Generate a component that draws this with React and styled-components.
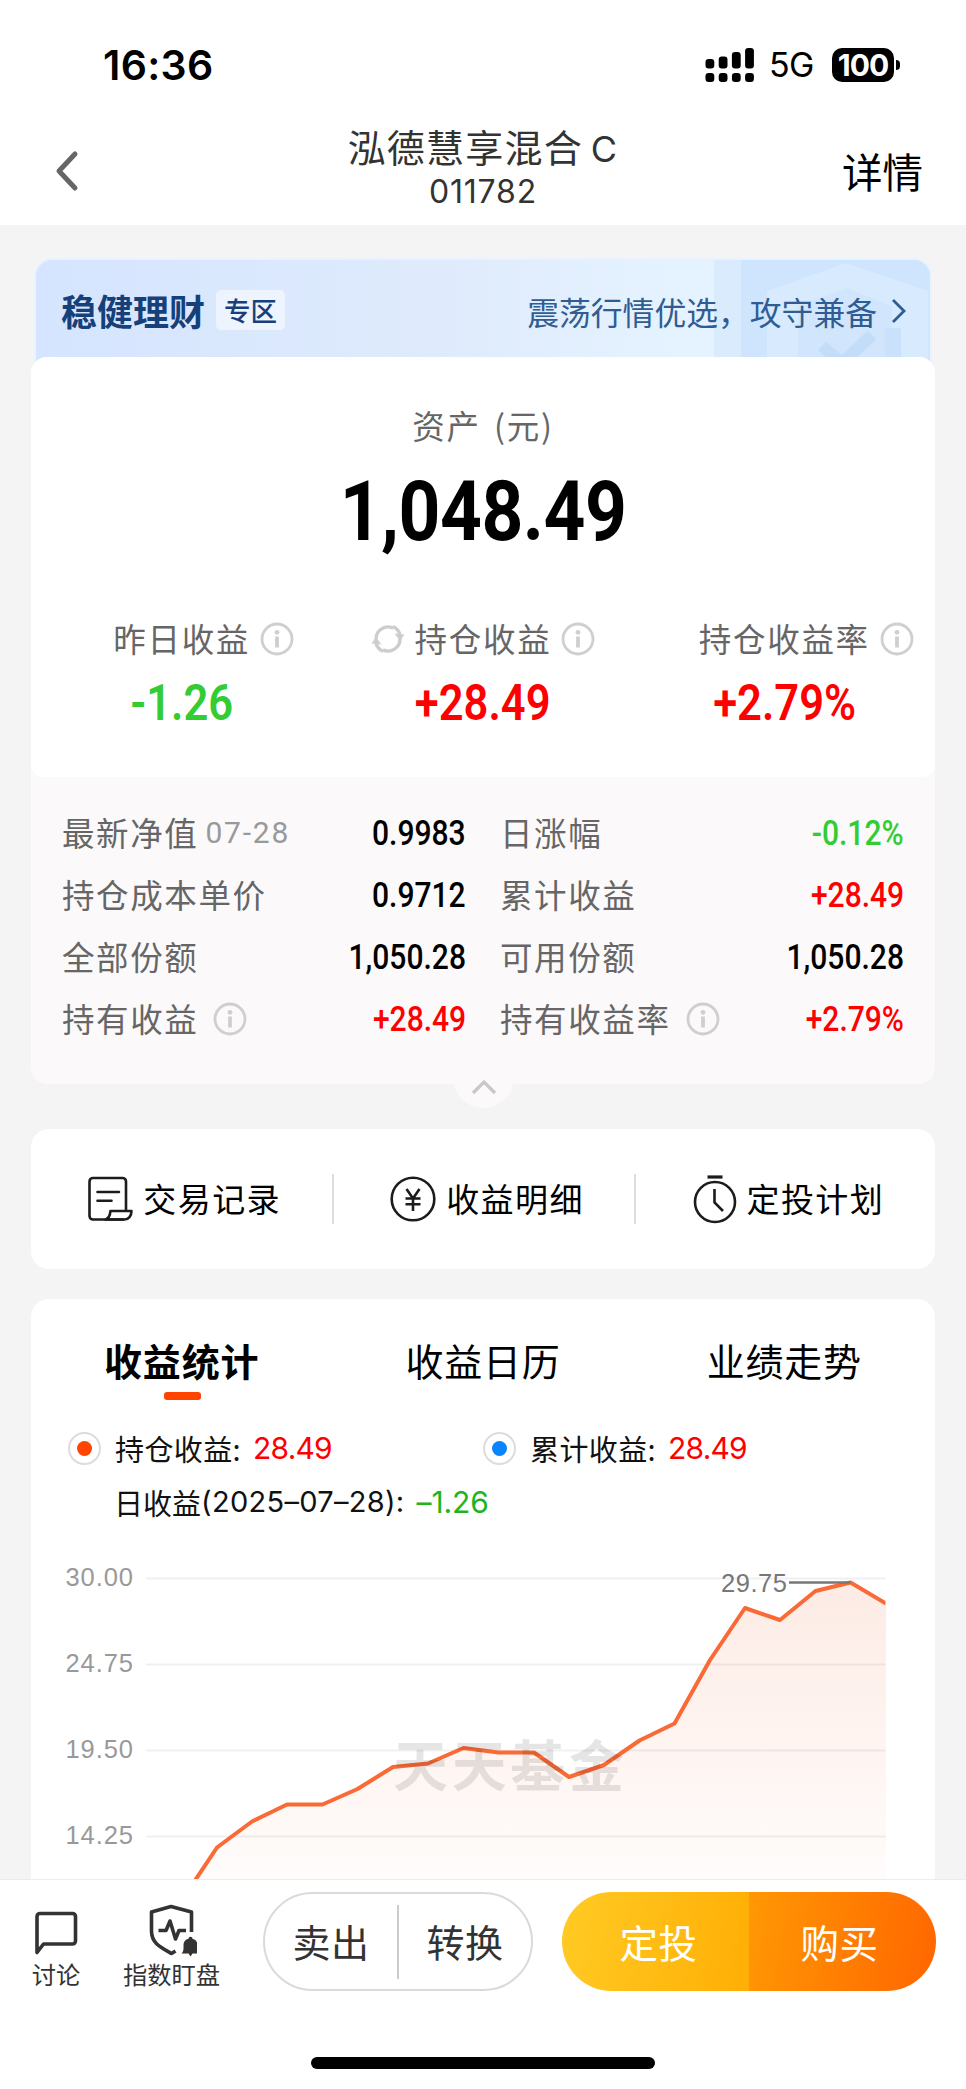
import styled, { createGlobalStyle, css } from "styled-components";

const HOLDING_METRICS = [
  { label: "昨日收益", value: "-1.26", tone: "down" },
  { label: "持仓收益", value: "+28.49", tone: "up", refresh: true },
  { label: "持仓收益率", value: "+2.79%", tone: "up" },
];

const DETAILS = [
  { label: "最新净值", date: "07-28", value: "0.9983" },
  { label: "日涨幅", value: "-0.12%", tone: "down" },
  { label: "持仓成本单价", value: "0.9712" },
  { label: "累计收益", value: "+28.49", tone: "up" },
  { label: "全部份额", value: "1,050.28" },
  { label: "可用份额", value: "1,050.28" },
  { label: "持有收益", value: "+28.49", tone: "up", info: true },
  { label: "持有收益率", value: "+2.79%", tone: "up", info: true },
];

const TABS = ["收益统计", "收益日历", "业绩走势"];

const AXIS = [
  { label: "30.00", y: 38.5 },
  { label: "24.75", y: 124.5 },
  { label: "19.50", y: 210.5 },
  { label: "14.25", y: 296.5 },
];

const POINTS = [
  [163, 342], [186, 307.5], [221, 281.5], [256, 264.5], [291.5, 264.5],
  [326.5, 249], [362, 227], [397, 223.5], [432.5, 208], [467.5, 212.5],
  [503, 212.5], [538, 237], [573, 225], [608.5, 200.5], [643.5, 183.5],
  [679, 120], [714, 68], [749, 80], [784.5, 51], [819.5, 42.5], [855, 63.5],
];

const InfoIcon = () => (
  <svg width="34" height="34" viewBox="0 0 34 34" fill="none" stroke="#cfcfcf">
    <circle cx="17" cy="17" r="15" strokeWidth="2.8" />
    <circle cx="17" cy="10.3" r="2.4" fill="#cfcfcf" stroke="none" />
    <path d="M17 14.5v11" strokeWidth="3.8" />
  </svg>
);

const RefreshIcon = () => (
  <svg width="34" height="32" viewBox="0 0 34 32" fill="none" stroke="#cdcdcd" strokeWidth="3.4">
    <path d="M5 16A12 12 0 0 1 22 5.100" />
    <path d="M29 16A12 12 0 0 1 12 26.900" />
    <path d="M22 3.500A13 13 0 0 1 29 12" />
    <path d="M12 28.500A13 13 0 0 1 5 20" />
    <path d="M0.500 20.500l4.500-6.500 5.500 7.500z" fill="#cdcdcd" stroke="none" />
    <path d="M33.500 11.500l-4.500 6.500-5.500-7.500z" fill="#cdcdcd" stroke="none" />
  </svg>
);

const RecordIcon = () => (
  <svg width="45" height="46" viewBox="0 0 45 46" fill="none" stroke="#1c1c1c" strokeWidth="2.6" strokeLinejoin="round">
    <path d="M38 34V5.500a3.500 3.500 0 0 0-3.500-3.500H5a3.500 3.500 0 0 0-3.500 3.500V40a3.500 3.500 0 0 0 3.500 3.500h31" />
    <path d="M22.500 35h21c0 5-3 8.500-7 8.500H17.500c3.500-1 4.500-4 5-8.500z" />
    <path d="M9.500 16H31M9.500 24.800h14" strokeLinecap="round" />
  </svg>
);

const YuanIcon = () => (
  <svg width="46" height="46" viewBox="0 0 46 46" fill="none" stroke="#1c1c1c" strokeWidth="2.6">
    <circle cx="23" cy="23" r="21.300" />
    <path d="M16.500 13l6.500 9.500 6.500-9.500M23 22.500v12.500M15.500 22.500h15M15.500 28.200h15" />
  </svg>
);

const TimerIcon = () => (
  <svg width="44" height="50" viewBox="0 0 44 50" fill="none" stroke="#1c1c1c" strokeWidth="2.6">
    <circle cx="22" cy="28" r="20" />
    <path d="M14.500 3h15" strokeWidth="3.200" />
    <path d="M21.500 15v13.500l8.500 8.500" />
  </svg>
);

const ChatIcon = () => (
  <svg width="44" height="46" viewBox="0 0 44 46" fill="none" stroke="#333" strokeWidth="3.6" strokeLinejoin="round">
    <path d="M3 41.500V5.500A3 3 0 0 1 6 2.500H38.500a3 3 0 0 1 3 3V30a3 3 0 0 1-3 3H9.500z" />
  </svg>
);

const WatchIcon = () => (
  <svg width="50" height="54" viewBox="-1.500 -2 50 54" fill="none" stroke="#333" strokeWidth="3.6" strokeLinejoin="round">
    <path d="M43 27V7L22.500 1.500 3 7V26c0 12 8.500 16 20 22.500l4-2.500" />
    <path d="M10 25.500h7.500l4-9.500 5.500 18 3.500-8.500h7" />
    <path d="M33 48.500c2.500-2.500 2-5 2-8.500a6.500 6.500 0 0 1 5-6.300a2 2 0 0 1 4 0a6.500 6.500 0 0 1 5 6.300c0 3.500-.5 6 1 8.500h-6l-2 3-2-3z" fill="#333" stroke="none" />
  </svg>
);

const SignalIcon = () => (
  <svg width="50" height="34" viewBox="0 0 50 34">
    {[11, 8.5, 4, 0].map((top, i) => (
      <g key={top}>
        <rect x={0.5 + i * 13.2} y={top} width="8.800" height={20.5 - top} rx="3.200" />
        <rect x={0.5 + i * 13.2} y="25" width="8.800" height="9" rx="3.200" />
      </g>
    ))}
  </svg>
);

function Chart() {
  const line = POINTS.map((p) => p.join(",")).join(" ");
  return (
    <ChartSvg width="904" height="339" viewBox="0 0 904 339">
      <defs>
        <linearGradient id="area" x1="0" y1="42" x2="0" y2="339" gradientUnits="userSpaceOnUse">
          <stop offset="0" stopColor="#f26a3b" stopOpacity="0.135" />
          <stop offset="1" stopColor="#f26a3b" stopOpacity="0.020" />
        </linearGradient>
        <clipPath id="plot">
          <rect x="115" y="0" width="739.500" height="339" />
        </clipPath>
      </defs>
      <polygon points={`${line} 855,342`} fill="url(#area)" />
      {AXIS.map(({ label, y }) => (
        <g key={label}>
          <path d={`M115 ${y}H854.500`} stroke="#000" strokeOpacity="0.060" strokeWidth="2" />
          <text x="102" y={y + 7} textAnchor="end" textLength="67.500" fill="#999">{label}</text>
        </g>
      ))}
      <polyline points={line} clipPath="url(#plot)" fill="none" stroke="#f96a37" strokeWidth="4" strokeLinejoin="round" />
      <path d="M758 42.500H819.500" stroke="#777" strokeWidth="2.600" />
      <text x="690" y="52" textLength="66" fill="#777">29.75</text>
      <Watermark x="362" y="246" textLength="231">天天基金</Watermark>
    </ChartSvg>
  );
}

function App() {
  return (
    <Page>
      <GlobalStyle />
      <StatusBar>
        <Clock>16:36</Clock>
        <StatusIcons>
          <SignalIcon />
          <Network>5G</Network>
          <Battery>100</Battery>
        </StatusIcons>
      </StatusBar>
      <NavBar>
        <svg width="26" height="44" viewBox="0 0 26 44" fill="none" stroke="#666" strokeWidth="5" strokeLinecap="round" strokeLinejoin="round">
          <path d="M21 5L5 22 21 39" />
        </svg>
        <NavTitle>
          <h1>泓德慧享混合<span>C</span></h1>
          <p>011782</p>
        </NavTitle>
        <NavLink>详情</NavLink>
      </NavBar>

      <Content>
        <Banner>
          <BannerArt width="216" height="113" viewBox="0 0 216 113">
            <path d="M0 0H216V113H0z" fill="#daebfe" />
            <path d="M27 0H216V113H27z" fill="#cfe5fe" />
            <path d="M132 3L214 31V113H53V31z" fill="#d7eafe" />
            <path d="M132 28L178 46V113H84V46z" fill="#d1e6fd" />
            <path d="M108 86L128 103 158 75" fill="none" stroke="#c3ddf9" strokeWidth="12" />
            <path d="M171 68h16v45h-16z" fill="#cae1fb" />
          </BannerArt>
          <BannerTitle>稳健理财</BannerTitle>
          <BannerTag>专区</BannerTag>
          <BannerLink>
            震荡行情优选，攻守兼备
            <svg width="16" height="26" viewBox="0 0 16 26" fill="none" stroke="#2f5d93" strokeWidth="2.8">
              <path d="M2 2l11 11L2 24" />
            </svg>
          </BannerLink>
        </Banner>

        <Holding>
          <AssetCard>
            <AssetLabel>资产 (元)</AssetLabel>
            <AssetValue>1,048.49</AssetValue>
            <Metrics>
              {HOLDING_METRICS.map(({ label, value, tone, refresh }) => (
                <div key={label}>
                  <MetricLabel>
                    <IconSlot $end>{refresh && <RefreshIcon />}</IconSlot>
                    <span>{label}</span>
                    <IconSlot><InfoIcon /></IconSlot>
                  </MetricLabel>
                  <MetricValue $tone={tone}>{value}</MetricValue>
                </div>
              ))}
            </Metrics>
          </AssetCard>
          <Details>
            {DETAILS.map(({ label, date, value, tone, info }) => (
              <DetailRow key={label}>
                <DetailLabel>{label}</DetailLabel>
                {date && <DetailDate>{date}</DetailDate>}
                {info && <InfoIcon />}
                <DetailValue $tone={tone}>{value}</DetailValue>
              </DetailRow>
            ))}
          </Details>
          <Collapse>
            <svg width="26" height="18" viewBox="0 0 26 18" fill="none" stroke="#c8c8c8" strokeWidth="3.200">
              <path d="M2 14L13 3 24 14" />
            </svg>
          </Collapse>
        </Holding>

        <Actions>
          <Action><RecordIcon /><span>交易记录</span></Action>
          <Action><YuanIcon /><span>收益明细</span></Action>
          <Action><TimerIcon /><span>定投计划</span></Action>
        </Actions>

        <StatsCard>
          <Tabs>
            {TABS.map((tab, i) => (
              <Tab key={tab} $active={i === 0}>{tab}</Tab>
            ))}
          </Tabs>
          <Legend>
            <LegendItem><Dot $color="#ff4400" />持仓收益:<LegendValue $tone="up">28.49</LegendValue></LegendItem>
            <LegendItem><Dot $color="#0a84ff" />累计收益:<LegendValue $tone="up">28.49</LegendValue></LegendItem>
          </Legend>
          <DayProfit>
            日收益<span>(2025–07–28):</span>
            <DayValue $tone="day">–1.26</DayValue>
          </DayProfit>
          <Chart />
        </StatsCard>
      </Content>

      <BottomBar>
        <Toolbar>
          <ToolItem $width={84}><ChatIcon />讨论</ToolItem>
          <ToolItem $width={147}><WatchIcon />指数盯盘</ToolItem>
          <OutlinePill>
            <button>卖出</button>
            <button>转换</button>
          </OutlinePill>
          <BuyPill>
            <InvestButton>定投</InvestButton>
            <BuyButton>购买</BuyButton>
          </BuyPill>
        </Toolbar>
        <HomeIndicator />
      </BottomBar>
    </Page>
  );
}

const cjk = `"Noto Sans CJK SC", sans-serif`;
const latin = `Inter, "Noto Sans CJK SC", sans-serif`;
const digits = `Roboto, "Noto Sans CJK SC", sans-serif`;

const tones = { up: "#ff0000", down: "#33cc33", day: "#1db51d" };

const GlobalStyle = createGlobalStyle`
  * {
    box-sizing: border-box;
  }

  body, h1, p {
    margin: 0;
  }

  body {
    background-color: #f4f4f4;
    font-family: ${cjk};
  }

  svg {
    display: block;
    flex: none;
  }

  button {
    border: 0;
    padding: 0;
    background: none;
    font: inherit;
    color: inherit;
    letter-spacing: inherit;
  }
`;

/* condensed numerals */
const Condensed = css`
  font-family: ${digits};
  transform: scaleX(0.87);
  white-space: nowrap;
`;

const Page = styled.div`
  width: 966px;
  height: 2089px;
  display: flex;
  flex-direction: column;
  overflow: hidden;
`;

const StatusBar = styled.header`
  flex: none;
  height: 105px;
  padding: 24px 66px 0 103px;
  display: flex;
  align-items: center;
  justify-content: space-between;
  background-color: white;
`;

const Clock = styled.span`
  font: 600 41px/50px ${latin};
  letter-spacing: 0.3px;
`;

const StatusIcons = styled.div`
  display: flex;
  align-items: center;
`;

const Network = styled.span`
  margin: 0 18px 0 14px;
  font: 400 34px/40px ${latin};
  letter-spacing: -0.5px;
`;

const Battery = styled.span`
  position: relative;
  width: 62px;
  height: 34px;
  margin-right: 6px;
  border-radius: 10px;
  background-color: black;
  color: white;
  text-align: center;
  font: 700 30px/34px ${latin};
  letter-spacing: -1px;

  &::after {
    content: "";
    position: absolute;
    right: -6px;
    top: 12px;
    width: 4px;
    height: 10px;
    border-radius: 0 4px 4px 0;
    background-color: black;
  }
`;

const NavBar = styled.nav`
  flex: none;
  height: 120px;
  padding: 12px 43px 0 54px;
  display: grid;
  grid-template-columns: 80px 1fr 91px;
  align-items: center;
  background-color: white;
`;

const NavTitle = styled.div`
  padding-bottom: 9px;
  text-align: center;
  color: #333;

  h1 {
    font: 400 38px/46px ${cjk};
    letter-spacing: 1.2px;
  }

  h1 span {
    margin-left: 8px;
    font-family: ${latin};
    font-size: 36px;
  }

  p {
    margin-top: 1px;
    font: 400 32px/38px ${latin};
    letter-spacing: 0.8px;
  }
`;

const NavLink = styled.a`
  text-align: right;
  font-size: 40.5px;
  line-height: 50px;
`;

const Content = styled.main`
  flex: 1;
  min-height: 0;
  overflow: hidden;
  padding: 35px 31px 0;
`;

const Banner = styled.section`
  position: relative;
  height: 113px;
  margin: 0 5px;
  padding: 0 23px 13px 25px;
  display: flex;
  align-items: center;
  overflow: hidden;
  border-radius: 16px 16px 0 0;
  background: linear-gradient(90deg, #d5e5ff, #dfebfc 45%, #e5f2ff 72%);
  box-shadow: 0 0 0 2px #eaf2fc;
`;

const BannerArt = styled.svg`
  position: absolute;
  right: 0;
  top: 0;
`;

const BannerTitle = styled.strong`
  color: #164079;
  font-size: 36px;
  line-height: 44px;
`;

const BannerTag = styled.span`
  margin-left: 11px;
  padding: 0 8px;
  border-radius: 5px;
  background-color: rgba(255, 255, 255, 0.5);
  color: #164079;
  font-size: 26.5px;
  font-weight: 500;
  line-height: 40px;
`;

const BannerLink = styled.a`
  position: relative;
  margin-left: auto;
  padding-top: 1px;
  display: flex;
  align-items: center;
  gap: 14px;
  color: #2f5d93;
  font-size: 31.8px;
  line-height: 40px;
`;

const Holding = styled.section`
  position: relative;
  height: 727px;
  margin-top: -16px;
  border-radius: 16px;
  background-color: #fbf9fa;
`;

const AssetCard = styled.div`
  position: relative;
  height: 420px;
  padding-top: 47px;
  border-radius: 16px 16px 12px 12px;
  background-color: white;
  text-align: center;
`;

const AssetLabel = styled.p`
  color: #666;
  font-size: 32.5px;
  line-height: 42px;
  letter-spacing: 1.8px;
  word-spacing: 4px;
`;

const AssetValue = styled.p`
  ${Condensed}
  margin-top: 21px;
  font-size: 84px;
  font-weight: 700;
  line-height: 90px;
  letter-spacing: -0.6px;
`;

const Metrics = styled.div`
  margin-top: 60px;
  display: grid;
  grid-template-columns: repeat(3, 1fr);
`;

const MetricLabel = styled.div`
  display: grid;
  grid-template-columns: 1fr auto 1fr;
  align-items: center;
  gap: 10px;
  color: #666;
  font-size: 32.5px;
  line-height: 42px;
  letter-spacing: 1.7px;
`;

const IconSlot = styled.span`
  height: 34px;
  padding-top: 2px;
  display: flex;
  align-items: center;
  justify-content: ${({ $end }) => ($end ? "flex-end" : "flex-start")};
`;

const MetricValue = styled.p`
  ${Condensed}
  margin-top: 17px;
  color: ${({ $tone }) => tones[$tone]};
  font-size: 50px;
  font-weight: 600;
  line-height: 54px;
`;

const Details = styled.div`
  padding: 25px 31px 0;
  display: grid;
  grid-template-columns: 404px 404px;
  column-gap: 34px;
`;

const DetailRow = styled.div`
  height: 62px;
  display: flex;
  align-items: center;

  svg {
    margin-left: 15px;
  }
`;

const DetailLabel = styled.span`
  padding-bottom: 3px;
  color: #666;
  font-size: 32.5px;
  line-height: 42px;
  letter-spacing: 1.6px;
`;

const DetailDate = styled.span`
  margin-left: 7px;
  color: #999;
  font: 400 30px/42px ${digits};
  letter-spacing: 1.8px;
`;

const DetailValue = styled.span`
  ${Condensed}
  transform-origin: right center;
  margin-left: auto;
  color: ${({ $tone }) => tones[$tone] || "#000"};
  font-size: 34.5px;
  font-weight: 500;
  line-height: 42px;
`;

const Collapse = styled.div`
  position: absolute;
  left: 422px;
  bottom: -24px;
  width: 61px;
  height: 61px;
  padding-top: 32px;
  display: flex;
  justify-content: center;
  border-radius: 50%;
  background-color: #fbf9fa;
`;

const Actions = styled.section`
  height: 140px;
  margin-top: 45px;
  display: grid;
  grid-template-columns: repeat(3, 1fr);
  align-items: center;
  border-radius: 18px;
  background-color: white;
`;

const Action = styled.a`
  height: 50px;
  display: flex;
  align-items: center;
  justify-content: center;
  gap: 10px;
  padding-left: 6px;
  font-size: 33px;
  line-height: 42px;
  letter-spacing: 1.4px;

  span {
    padding-bottom: 2px;
  }

  & + & {
    border-left: 2px solid #ddd;
  }
`;

const StatsCard = styled.section`
  height: 620px;
  margin-top: 30px;
  border-radius: 18px 18px 0 0;
  background-color: white;
`;

const Tabs = styled.div`
  padding-top: 34px;
  display: grid;
  grid-template-columns: repeat(3, 1fr);
`;

const Tab = styled.div`
  display: flex;
  flex-direction: column;
  align-items: center;
  font-size: 38px;
  font-weight: ${({ $active }) => ($active ? 700 : 400)};
  line-height: 54px;
  letter-spacing: 0.8px;

  &::after {
    content: "";
    width: 37px;
    height: 8px;
    margin: 5px 0 0 2px;
    border-radius: 3px;
    background-color: ${({ $active }) => ($active ? "#ff4400" : "transparent")};
  }
`;

const Legend = styled.div`
  height: 42px;
  margin-top: 27px;
  padding-left: 37px;
  display: grid;
  grid-template-columns: 415px 1fr;
  align-items: center;
`;

const LegendItem = styled.div`
  display: flex;
  align-items: center;
  color: #111;
  font-size: 29px;
  line-height: 42px;
  letter-spacing: 0.4px;
`;

const Dot = styled.i`
  width: 33px;
  height: 33px;
  margin-right: 14px;
  display: flex;
  align-items: center;
  justify-content: center;
  border: 2px solid #dcdcdc;
  border-radius: 50%;

  &::after {
    content: "";
    width: 15px;
    height: 15px;
    border-radius: 50%;
    background-color: ${({ $color }) => $color};
  }
`;

const LegendValue = styled.span`
  margin-left: 12px;
  color: ${({ $tone }) => tones[$tone]};
  font: 400 30px/42px ${latin};
  letter-spacing: -0.8px;
`;

const DayValue = styled(LegendValue)`
  letter-spacing: -0.1px;
`;

const DayProfit = styled.div`
  height: 42px;
  margin: 12px 0 17px 83px;
  display: flex;
  align-items: center;
  color: #111;
  font-size: 29px;
  line-height: 42px;

  > span:first-of-type {
    font-family: ${latin};
    letter-spacing: 0.3px;
  }
`;

const ChartSvg = styled.svg`
  font: 25.5px "Liberation Sans", sans-serif;
`;

const Watermark = styled.text`
  fill: rgba(0, 0, 0, 0.1);
  font: 700 55px ${cjk};
`;

const BottomBar = styled.footer`
  flex: none;
  height: 210px;
  border-top: 1px solid #ececec;
  background-color: white;
`;

const Toolbar = styled.div`
  height: 124px;
  padding: 12px 30px 0 14px;
  display: flex;
  align-items: flex-start;
`;

const ToolItem = styled.div`
  width: ${({ $width }) => $width}px;
  height: 99px;
  display: flex;
  flex-direction: column;
  align-items: center;
  justify-content: flex-end;
  color: #333;
  font-size: 24.3px;
  line-height: 34px;
`;

const OutlinePill = styled.div`
  width: 270px;
  height: 99px;
  margin-left: 18px;
  display: flex;
  align-items: center;
  border: 2px solid #dadada;
  border-radius: 50px;
  color: #333;
  font-size: 38px;
  letter-spacing: 0.5px;

  button {
    flex: 1;
    height: 74px;
    padding-bottom: 2px;
  }

  button + button {
    border-left: 2px solid #ccc;
  }
`;

const BuyPill = styled.div`
  width: 374px;
  height: 99px;
  margin-left: auto;
  display: flex;
  overflow: hidden;
  border-radius: 50px;
  color: white;
  font-size: 38.5px;
  letter-spacing: 0.5px;
`;

const InvestButton = styled.button`
  flex: 1;
  padding: 0 0 1px 6px;
  background: linear-gradient(100deg, #ffcb24, #ffae05);
`;

const BuyButton = styled.button`
  flex: 1;
  padding: 0 6px 1px 0;
  background: linear-gradient(100deg, #ff9804, #ff6600);
`;

const HomeIndicator = styled.div`
  width: 344px;
  height: 12px;
  margin: 53px auto 0;
  border-radius: 6px;
  background-color: black;
`;

export default App;
